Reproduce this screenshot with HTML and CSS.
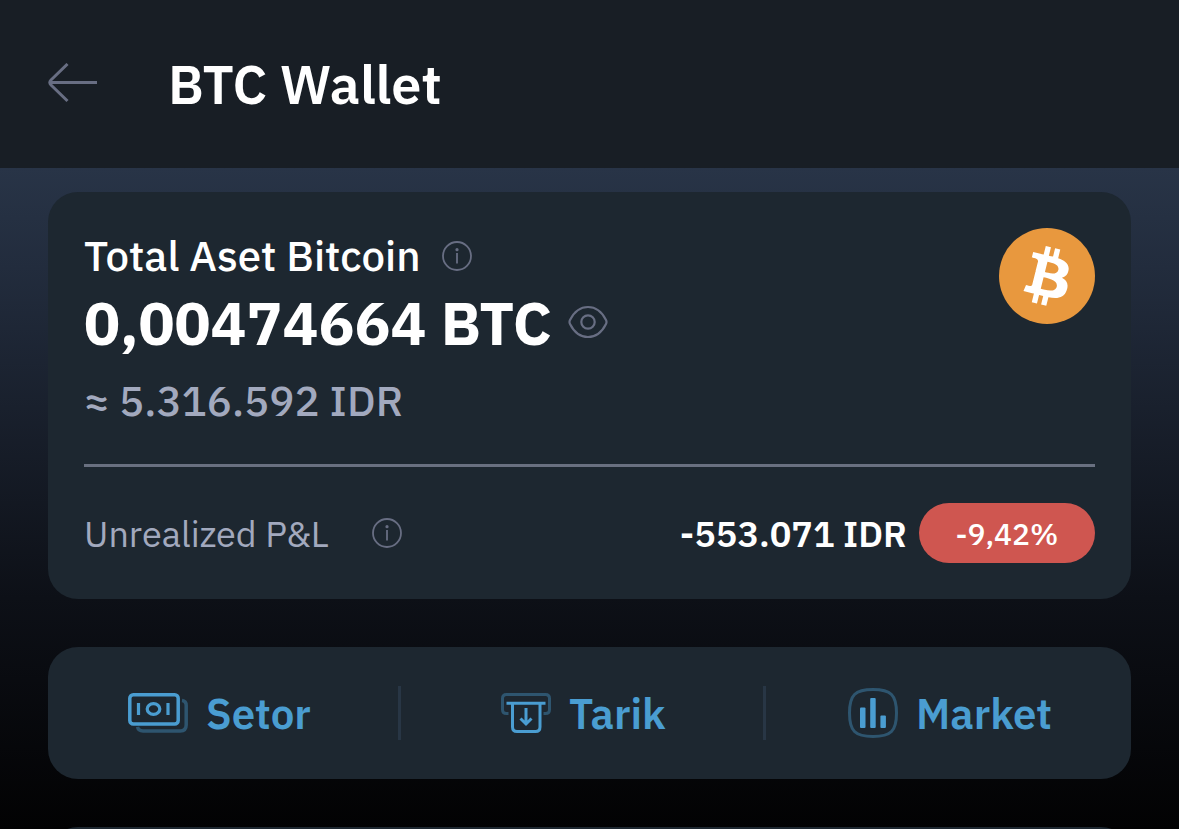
FILE: index.html
```html
<!DOCTYPE html>
<html lang="id">
<head>
    <meta charset="UTF-8">
    <meta name="viewport" content="width=device-width, initial-scale=1.0">
    <title>BTC Wallet</title>
    <link rel="stylesheet" href="styles.css">
</head>
<body>

<header class="topbar">
    <svg class="back" width="50" height="40" viewBox="0 0 50 40" fill="none" stroke="#686e83" stroke-width="3">
        <path d="M49 19.500H3M19.5 1L3 17Q.5 19.500 3 22L19.5 38"/>
    </svg>
    <h1 class="title">BTC Wallet</h1>
</header>

<main class="content">
    <section class="card">
        <div class="asset">
            <div class="asset-info">
                <div class="row label-row">
                    <span class="asset-label">Total Aset Bitcoin</span>
                    <svg class="info" width="30" height="30" viewBox="0 0 30 30" fill="none" stroke="#686e83" stroke-width="1.8">
                        <circle cx="15" cy="15" r="14"/>
                        <path d="M15 12v10.500"/>
                        <circle cx="15" cy="8.700" r="1.600" fill="#686e83" stroke="none"/>
                    </svg>
                </div>
                <div class="row amount-row">
                    <span class="amount">0,00474664 BTC</span>
                    <svg class="eye" width="40" height="34" viewBox="0 0 40 34" fill="none" stroke="#686e83" stroke-width="2.2">
                        <path d="M2 15C6 7 12 2 20 2s14 5 18 13q1 2 0 4C34 27 28 32 20 32S6 27 2 19q-1-2 0-4z"/>
                        <circle cx="20" cy="17" r="6.7"/>
                    </svg>
                </div>
                <div class="row approx-row">
                    <span class="approx">≈ 5.316.592 IDR</span>
                </div>
            </div>
            <svg class="coin" width="96" height="96" viewBox="0 0 32 32">
                <circle cx="16" cy="16" r="16" fill="#e8983e"/>
                <path fill="#fff" fill-rule="evenodd" d="M23.189 14.02c.314-2.096-1.283-3.223-3.465-3.975l.708-2.84-1.728-.43-.69 2.765c-.454-.114-.92-.22-1.385-.326l.695-2.783L15.596 6l-.708 2.839c-.376-.086-.746-.17-1.104-.26l.002-.009-2.384-.595-.46 1.846s1.283.294 1.256.312c.7.175.826.638.805 1.006l-.806 3.235c.048.012.11.03.18.057l-.183-.045-1.13 4.532c-.086.212-.303.531-.793.41.018.025-1.256-.313-1.256-.313l-.858 1.978 2.25.561c.418.105.828.215 1.231.318l-.715 2.872 1.727.43.708-2.84c.472.127.93.245 1.378.357l-.706 2.828 1.728.43.715-2.866c2.948.558 5.164.333 6.097-2.333.752-2.146-.037-3.385-1.588-4.192 1.13-.26 1.98-1.003 2.207-2.538zm-3.95 5.538c-.533 2.147-4.148.986-5.32.695l.95-3.805c1.172.293 4.929.872 4.37 3.11zm.535-5.569c-.487 1.953-3.495.96-4.47.717l.86-3.45c.975.243 4.118.696 3.61 2.733z"/>
            </svg>
        </div>
        <div class="divider"></div>
        <div class="pnl">
            <span class="pnl-label">Unrealized P&amp;L</span>
            <svg class="info" width="30" height="30" viewBox="0 0 30 30" fill="none" stroke="#686e83" stroke-width="1.8">
                <circle cx="15" cy="15" r="14"/>
                <path d="M15 12v10.500"/>
                <circle cx="15" cy="8.700" r="1.600" fill="#686e83" stroke="none"/>
            </svg>
            <span class="pnl-value">-553.071 IDR</span>
            <span class="badge">-9,42%</span>
        </div>
    </section>

    <nav class="actions">
        <a class="action setor">
            <svg width="60" height="50" viewBox="0 0 60 50" fill="none" stroke="#4a9dd1" stroke-width="3.5">
                <path stroke="#2e556f" d="M54 12.500q4.200.5 4.200 5V36.700q0 6.200-6 6.200H15q-4.600 0-5.500-4"/>
                <rect x="1.800" y="6.800" width="48.400" height="29.200" rx="3.500"/>
                <path stroke-width="3.200" d="M10.500 15v12M40 15v12"/>
                <ellipse cx="25.500" cy="21" rx="6.300" ry="5.300" stroke-width="3.200"/>
            </svg>
            <span class="action-text">Setor</span>
        </a>
        <a class="action tarik">
            <svg width="50" height="50" viewBox="0 0 50 50" fill="none" stroke="#4a9dd1" stroke-width="3">
                <path stroke="#2e556f" d="M7.500 25.500H5.500q-4 0-4-4V10.500q0-4 4-4h39q4 0 4 4v11q0 4-4 4h-2"/>
                <path d="M5.500 15.300h39M11.500 15.300V39q0 4.500 4.500 4.500h18.500q4.500 0 4.500-4.500V15.300"/>
                <path d="M25 20V35.500M19.500 30.500l5.500 5.500 5.500-5.500"/>
            </svg>
            <span class="action-text">Tarik</span>
        </a>
        <a class="action market">
            <svg width="50" height="50" viewBox="0 0 50 50" fill="none">
                <path stroke="#2e556f" stroke-width="3" d="M25 1.500C43 1.500 48.500 7 48.500 25S43 48.500 25 48.500 1.500 43 1.500 25 7 1.500 25 1.500z"/>
                <g fill="#4a9dd1">
                    <rect x="12" y="19.500" width="5.500" height="20.500" rx="1"/>
                    <rect x="22.200" y="10" width="5.500" height="30" rx="1"/>
                    <rect x="32.400" y="27.500" width="5.500" height="12.500" rx="1"/>
                </g>
            </svg>
            <span class="action-text">Market</span>
        </a>
    </nav>

    <section class="card next-card"></section>
</main>

</body>
</html>
```
FILE: styles.css
```css
* {
    box-sizing: border-box;
}
body {
    margin: 0;
    height: 829px;
    overflow: hidden;
    background: #000;
    color: #fff;
    font-family: "IBM Plex Sans", "Noto Sans", sans-serif;
    white-space: nowrap;
}
.topbar {
    display: flex;
    align-items: center;
    height: 168px;
    padding: 0 48px;
    background: #181e25;
}
.back {
    margin-top: -3px;
}
.title {
    margin: 0 0 0 70px;
    font-size: 54px;
    font-weight: 600;
    line-height: 72px;
}
.content {
    height: 661px;
    padding: 24px 48px 0;
    overflow: hidden;
    background: linear-gradient(#283447 0%, #222c3d 15%, #0d1017 65%, #020203 100%);
}
.card {
    height: 407px;
    padding: 36px;
    border-radius: 30px;
    background: #1d2730;
}
.asset {
    display: flex;
    justify-content: space-between;
    height: 236px;
}
.row {
    display: flex;
    align-items: center;
}
.label-row {
    height: 56px;
    gap: 22px;
}
.amount-row {
    height: 80px;
    gap: 18px;
}
.approx-row {
    height: 72px;
}
.asset-label {
    width: 336px;
    margin-top: -2px;
    font-size: 42px;
    font-weight: 500;
}
.amount {
    width: 466px;
    margin-top: -4px;
    font-size: 60px;
    font-weight: 700;
}
.eye {
    margin-top: -4px;
}
.approx {
    font-size: 42px;
    font-weight: 500;
    color: #a2a9be;
}
.divider {
    height: 3px;
    background: #697080;
}
.pnl {
    display: flex;
    align-items: center;
    height: 60px;
    margin-top: 36px;
}
.pnl-label {
    width: 288px;
    font-size: 36px;
    color: #a2a9be;
}
.pnl-value {
    margin-left: auto;
    font-size: 36px;
    font-weight: 600;
}
.badge {
    width: 176px;
    height: 60px;
    margin-left: 12px;
    border-radius: 30px;
    background: #cf5650;
    font-size: 30px;
    font-weight: 500;
    line-height: 62px;
    text-align: center;
}
.actions {
    display: flex;
    align-items: center;
    height: 132px;
    margin-top: 48px;
    border-radius: 30px;
    background: #1d2730;
}
.action {
    display: flex;
    align-items: center;
    gap: 18px;
    height: 54px;
    color: #4a9dd1;
    font-size: 42px;
    font-weight: 600;
}
.setor {
    width: 353px;
    padding-left: 80px;
    border-right: 3px solid #283645;
}
.tarik {
    width: 365px;
    padding-left: 100px;
    border-right: 3px solid #283645;
}
.market {
    padding-left: 82px;
}
.next-card {
    margin-top: 48px;
}
```
